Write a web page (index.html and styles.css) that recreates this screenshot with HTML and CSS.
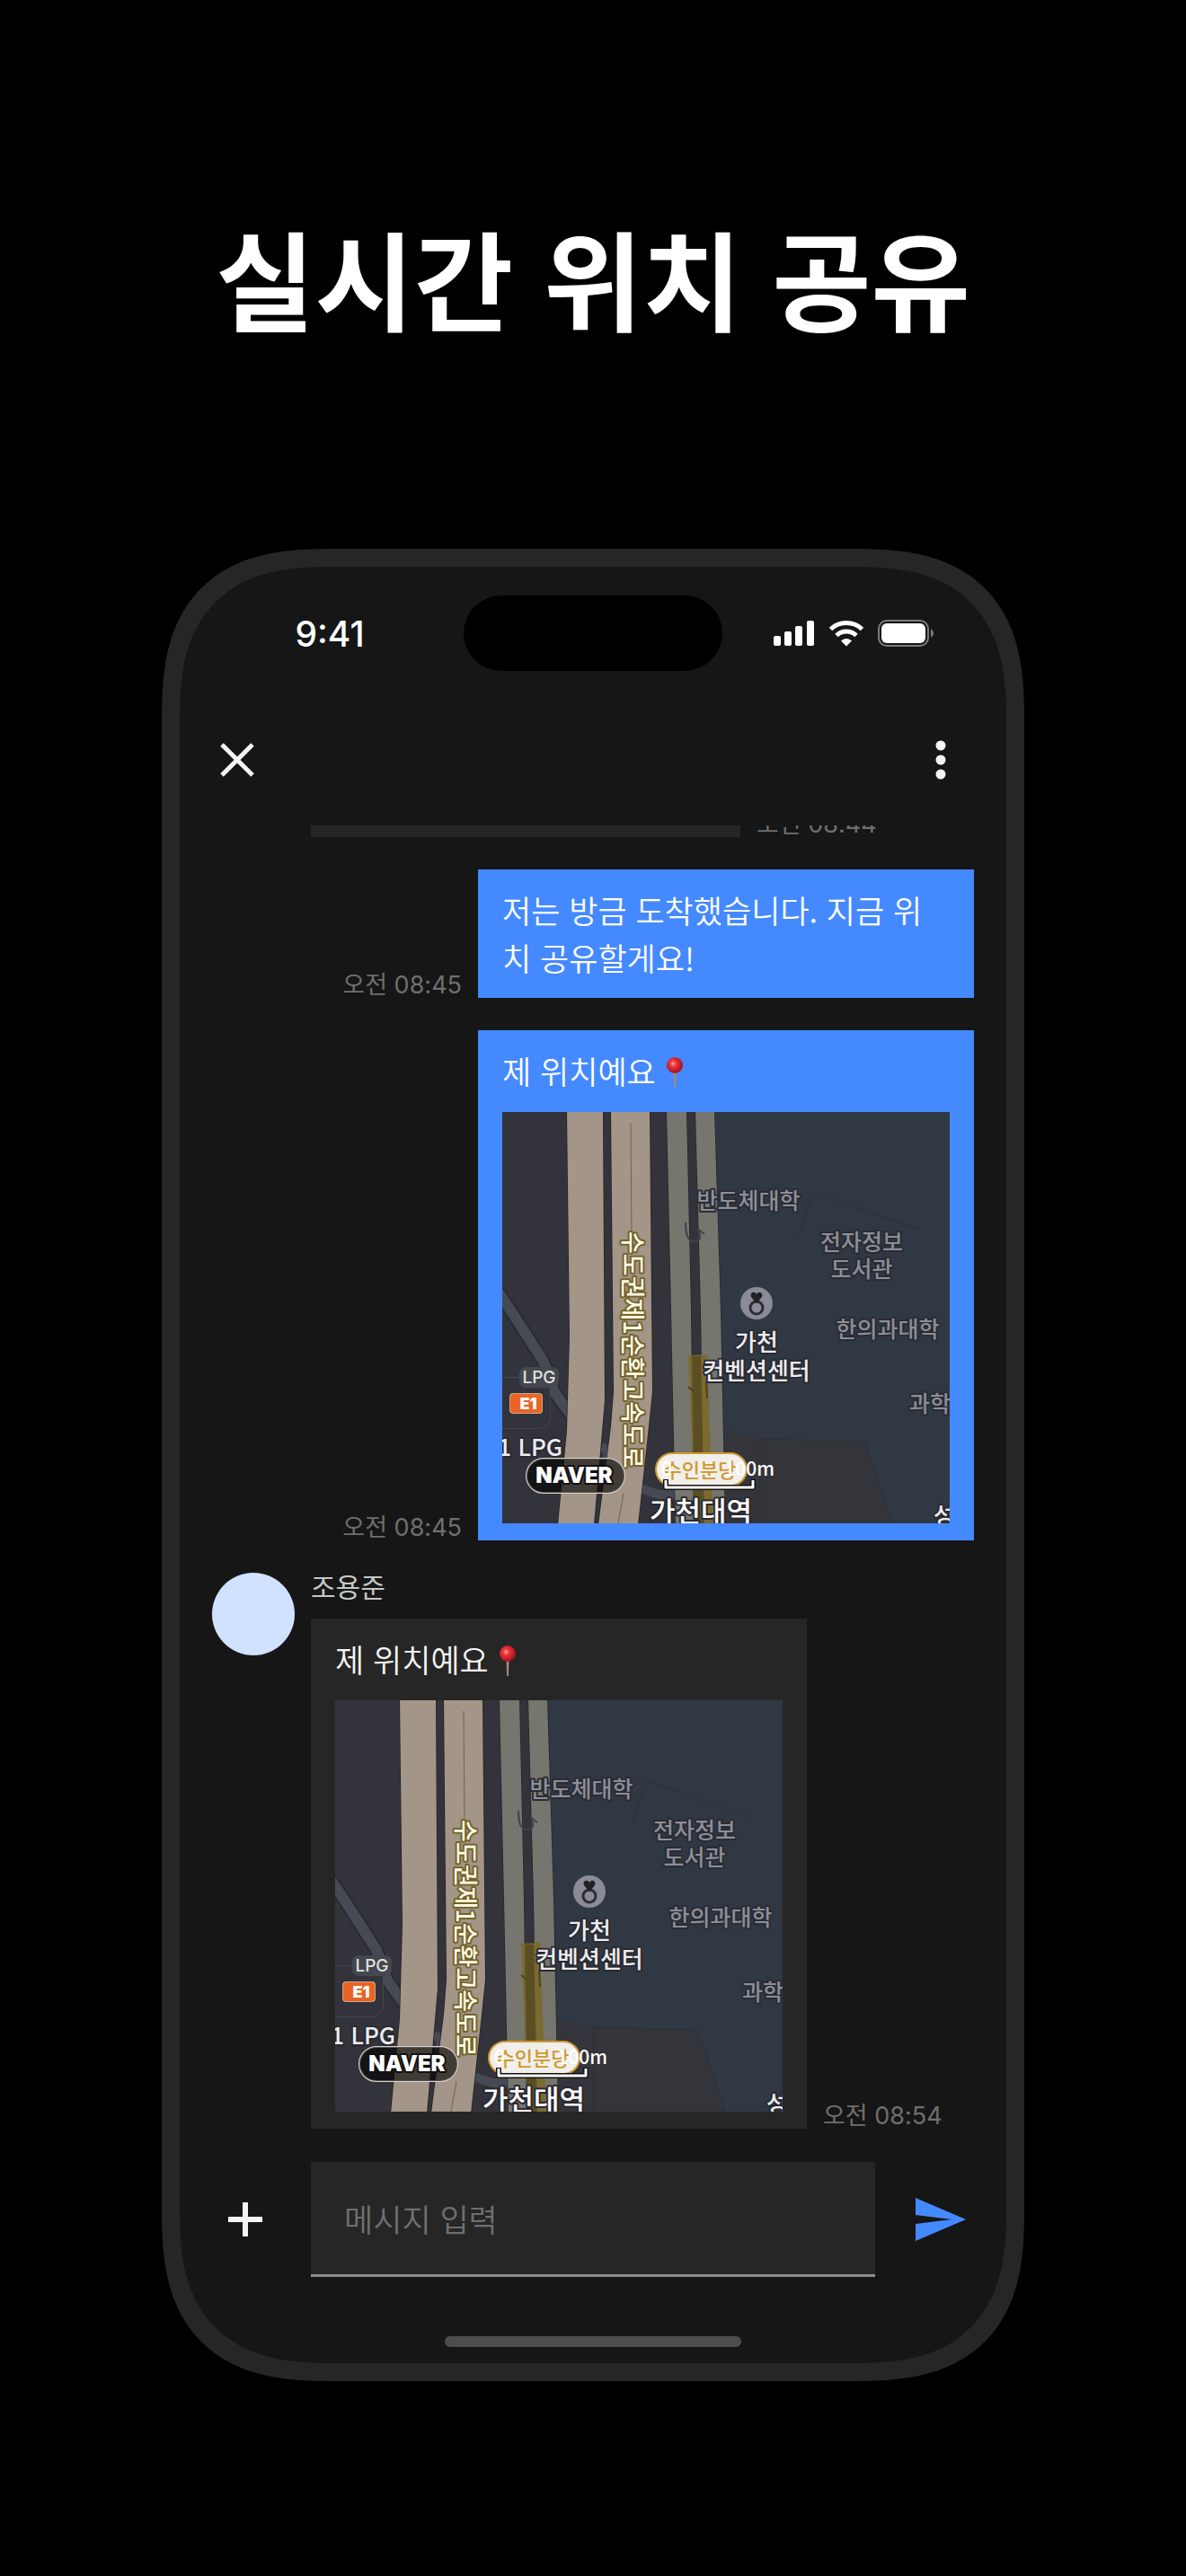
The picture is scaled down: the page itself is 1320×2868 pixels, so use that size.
FILE: index.html
```html
<!DOCTYPE html>
<html lang="ko">
<head>
    <meta charset="UTF-8">
    <meta name="viewport" content="width=device-width, initial-scale=1.0">
    <title>실시간 위치 공유</title>
    <link rel="stylesheet" href="styles.css">
</head>
<body>
    <!-- shared drawings -->
    <svg class="defs" aria-hidden="true">
        <defs>
            <radialGradient id="pinRed" cx="0.4" cy="0.4" r="0.6">
                <stop offset="0" stop-color="#ff9a90"/>
                <stop offset="0.35" stop-color="#e8323a"/>
                <stop offset="1" stop-color="#a8121c"/>
            </radialGradient>
        </defs>
        <symbol id="pin" viewBox="0 0 36 36">
            <path d="M15.500 17h3l-.6 18h-1.800z" fill="#a08a80"/>
            <circle cx="17" cy="10" r="9" fill="url(#pinRed)"/>
        </symbol>
        <symbol id="mapBase" viewBox="0 0 498 458">
            <rect width="498" height="458" fill="#33333b"/>
            <path d="M236 0H498V458H248z" fill="#303844"/>
            <path d="M249 354L287 364L403 367L418 410L434 458H246z" fill="#34343b"/>
            <path d="M287 364V458M287 364L403 367L418 410L434 458M345 89L464 131M345 89L330 138" fill="none" stroke="#2c3139"/>
            <!-- side streets -->
            <path d="M-6 198L12 225L46 278L58 312L84 348" fill="none" stroke="#26282e" stroke-width="15"/>
            <path d="M-6 198L12 225L46 278L58 312L84 348" fill="none" stroke="#454a54" stroke-width="12"/>
            <path d="M110 372L118 378L116 392M150 418L175 426H198" fill="none" stroke="#454a54" stroke-width="10"/>
            <!-- expressway -->
            <g fill="#a39587" stroke="#27221f" stroke-width="1.500">
                <path d="M72 -2H112L114 321L102 460H62L72 355L75 250z"/>
                <path d="M121 -2H164L167 311L163 350L151 460H107L121 350L124 311z"/>
                <path d="M143 12L144 140M135 424L129 458" fill="none" stroke="#6d625a" stroke-width="1"/>
            </g>
            <!-- railway -->
            <g fill="#76756e" stroke="#26272b" stroke-width="1.500">
                <path d="M183 -2H205L210 221L213 460H193L188 221z"/>
                <path d="M215 -2H236L243 221L248 460H225L221 221z"/>
            </g>
            <path d="M204 123C204 138 207 144 214 144C221 144 222 138 218 132M217 130L225 136" fill="none" stroke="#3e434b" stroke-width="2"/>
            <path d="M207 271L228 270L235 458H215z" fill="#7b6a2c" opacity="0.9"/>
            <path d="M211 272H221L225 458H214z" fill="#5b4e22"/>
            <path d="M207 306L213 311M227 300L228 319" fill="none" stroke="#4c421f" stroke-width="2"/>
            <!-- convention center marker -->
            <circle cx="283" cy="213" r="18" fill="#8a8b97"/>
            <circle cx="283" cy="218" r="7" fill="none" stroke="#2b2d34" stroke-width="3"/>
            <path d="M283 213L277 206C275 201 281 199 283 203C285 199 291 201 289 206z" fill="#1f2126"/>
            <!-- gas station -->
            <rect x="-8" y="296" width="61" height="56" rx="12" fill="#33333b" stroke="#4b4c54" stroke-width="1.500"/>
            <rect x="9" y="314" width="35" height="21" rx="3" fill="#ea6424" stroke="#f6cdb9" stroke-width="1.500"/>
            <rect x="19" y="284" width="44" height="23" rx="7" fill="#44484e"/>
        </symbol>
        <symbol id="mapBadges" viewBox="0 0 498 458">
            <rect x="27" y="386" width="109" height="38" rx="19" fill="#000" fill-opacity="0.6" stroke="#d9d1cb" stroke-width="2"/>
            <rect x="172" y="381" width="99" height="34" rx="17" fill="#f1efeb" stroke="#d09a30" stroke-width="4"/>
        </symbol>
        <symbol id="mapScale" viewBox="0 0 498 458">
            <path d="M182 409V418H279V409" fill="none" stroke="#111" stroke-width="6"/>
            <path d="M182 410V418H279V410" fill="none" stroke="#fff" stroke-width="3"/>
        </symbol>
    </svg>

    <h1 class="title">실시간 위치 공유</h1>

    <main class="phone">
        <div class="status-bar">
            <span class="clock">9:41</span>
            <div class="island"></div>
            <div class="status-icons">
                <svg width="46" height="30" viewBox="0 0 46 30" fill="#fff">
                    <rect x="0" y="18" width="8" height="11" rx="2"/>
                    <rect x="12" y="13" width="8" height="16" rx="2"/>
                    <rect x="24" y="7" width="8" height="22" rx="2"/>
                    <rect x="37" y="1" width="8" height="28" rx="2"/>
                </svg>
                <svg width="40" height="30" viewBox="0 0 40 30" fill="none" stroke="#fff" stroke-width="5">
                    <path d="M2.500 10.500C12 1.200 28 1.200 37.500 10.500"/>
                    <path d="M9 17.500C15 11.500 25 11.500 31 17.500"/>
                    <path d="M14 23.500C17.500 20 22.500 20 26 23.500L20 29.500z" fill="#fff" stroke="none"/>
                </svg>
                <svg width="64" height="30" viewBox="0 0 64 30">
                    <rect x="1" y="1" width="55" height="28" rx="9" fill="none" stroke="#7b7b7b" stroke-width="2"/>
                    <rect x="4" y="4" width="49" height="22" rx="6" fill="#fff"/>
                    <path d="M59 10.500C63 12 63 18 59 19.500z" fill="#7b7b7b"/>
                </svg>
            </div>
        </div>

        <header class="app-bar">
            <button class="icon-button" type="button" aria-label="닫기">
                <svg width="56" height="56" viewBox="0 0 56 56" stroke="#f4f4f4" stroke-width="5"><path d="M11 11L45 45M45 11L11 45"/></svg>
            </button>
            <button class="icon-button" type="button" aria-label="메뉴">
                <svg width="56" height="56" viewBox="0 0 56 56" fill="#f4f4f4"><circle cx="28" cy="12" r="5.500"/><circle cx="28" cy="28" r="5.500"/><circle cx="28" cy="44" r="5.500"/></svg>
            </button>
        </header>

        <section class="chat">
            <div class="message received">
                <div class="bubble short"></div>
                <time class="time">오전 08:44</time>
            </div>

            <div class="message sent">
                <time class="time">오전 08:45</time>
                <div class="bubble">
                    <p>저는 방금 도착했습니다. 지금 위치 공유할게요!</p>
                </div>
            </div>

            <div class="message sent">
                <time class="time">오전 08:45</time>
                <div class="bubble">
                    <p>제 위치예요<svg class="pin"><use href="#pin"/></svg></p>
                    <svg class="map" viewBox="0 0 498 458">
                        <use href="#mapBase"/>
                        <text class="road" transform="translate(135 133) rotate(90)">수도권제1순환고속도로</text>
                        <text class="place" x="274" y="108">반도체대학</text>
                        <text class="place" x="400" y="154">전자정보</text>
                        <text class="place" x="400" y="184">도서관</text>
                        <text class="place" x="429" y="251">한의과대학</text>
                        <text class="place start" x="453" y="334">과학</text>
                        <text class="poi" x="283" y="266">가천</text>
                        <text class="poi" x="283" y="298">컨벤션센터</text>
                        <text class="poi start" x="480" y="459">성</text>
                        <text class="tag" x="41" y="302">LPG</text>
                        <text class="brand" x="29" y="331">E1</text>
                        <text class="poi end" x="67" y="383">1 LPG</text>
                        <use href="#mapBadges"/>
                        <text class="naver" x="80" y="413">NAVER</text>
                        <text class="line" x="220" y="407">수인분당</text>
                        <text class="scale" x="177" y="405">0</text>
                        <text class="scale end" x="303" y="405">100m</text>
                        <text class="station" x="221" y="456">가천대역</text>
                        <use href="#mapScale"/>
                    </svg>
                </div>
            </div>

            <div class="message received">
                <div class="avatar"></div>
                <div class="body">
                    <span class="name">조용준</span>
                    <div class="bubble">
                        <p>제 위치예요<svg class="pin"><use href="#pin"/></svg></p>
                        <svg class="map" viewBox="0 0 498 458">
                            <use href="#mapBase"/>
                            <text class="road" transform="translate(135 133) rotate(90)">수도권제1순환고속도로</text>
                            <text class="place" x="274" y="108">반도체대학</text>
                            <text class="place" x="400" y="154">전자정보</text>
                            <text class="place" x="400" y="184">도서관</text>
                            <text class="place" x="429" y="251">한의과대학</text>
                            <text class="place start" x="453" y="334">과학</text>
                            <text class="poi" x="283" y="266">가천</text>
                            <text class="poi" x="283" y="298">컨벤션센터</text>
                            <text class="poi start" x="480" y="459">성</text>
                            <text class="tag" x="41" y="302">LPG</text>
                            <text class="brand" x="29" y="331">E1</text>
                            <text class="poi end" x="67" y="383">1 LPG</text>
                            <use href="#mapBadges"/>
                            <text class="naver" x="80" y="413">NAVER</text>
                            <text class="line" x="220" y="407">수인분당</text>
                            <text class="scale" x="177" y="405">0</text>
                            <text class="scale end" x="303" y="405">100m</text>
                            <text class="station" x="221" y="456">가천대역</text>
                            <use href="#mapScale"/>
                        </svg>
                    </div>
                </div>
                <time class="time">오전 08:54</time>
            </div>
        </section>

        <form class="composer">
            <button class="icon-button" type="button" aria-label="첨부">
                <svg width="56" height="56" viewBox="0 0 56 56" stroke="#f4f4f4" stroke-width="6"><path d="M9 28H47M28 9V47"/></svg>
            </button>
            <input type="text" aria-label="메시지 입력" placeholder="메시지 입력">
            <button class="icon-button" type="submit" aria-label="보내기">
                <svg width="56" height="56" viewBox="0 0 56 56" fill="#4589ff"><path d="M0 4L56 28L0 52V33L40 28L0 23z"/></svg>
            </button>
        </form>

        <div class="home-indicator"></div>
    </main>
</body>
</html>
```

FILE: styles.css
```css
* {
    box-sizing: border-box;
}
body {
    margin: 0;
    padding: 220px 24px 217px;
    background-color: #000;
    color: #f4f4f4;
    font-family: Inter, "Noto Sans CJK KR", sans-serif;
}
.defs {
    position: absolute;
    width: 0;
    height: 0;
}
.title {
    margin: 0 0 215px;
    font-family: "Noto Sans CJK KR", sans-serif;
    font-size: 120px;
    font-weight: 700;
    line-height: 176px;
    text-align: center;
    color: #fff;
}

/* Device */
.phone {
    display: flex;
    flex-direction: column;
    width: 100%;
    max-width: 960px;
    aspect-ratio: 8 / 17;
    margin: 0 auto;
    border: 20px solid #262626;
    border-radius: 150px;
    background-color: #161616;
    overflow: hidden;
}
@supports (corner-shape: superellipse(1.4)) {
    .phone {
        border-radius: 190px;
        corner-shape: superellipse(1.4);
    }
}
.status-bar {
    display: grid;
    grid-template-columns: 1fr 288px 1fr;
    align-items: center;
    justify-items: center;
    padding-top: 32px;
}
.clock {
    padding-left: 18px;
    font-size: 39px;
    font-weight: 500;
    color: #fff;
}
.island {
    width: 288px;
    height: 84px;
    border-radius: 42px;
    background-color: #000;
}
.status-icons {
    display: flex;
    gap: 15px;
    padding-right: 22px;
}
.app-bar {
    display: flex;
    align-items: center;
    justify-content: space-between;
    height: 146px;
    margin-top: 26px;
    padding: 0 36px;
}
.icon-button {
    display: flex;
    align-items: center;
    justify-content: center;
    padding: 0;
    border: 0;
    background: none;
    cursor: pointer;
}
.app-bar .icon-button {
    width: 56px;
    height: 56px;
}
.app-bar .icon-button:last-child {
    width: 74px;
}

/* Messages, newest at the bottom */
.chat {
    display: flex;
    flex: 1 1 0;
    flex-direction: column;
    justify-content: flex-end;
    gap: 36px;
    min-height: 0;
    padding: 0 36px;
    overflow: hidden;
}
.message {
    display: flex;
    align-items: flex-end;
    gap: 18px;
}
.sent {
    justify-content: flex-end;
}
.bubble {
    width: 552px;
    padding: 18px 27px 19px;
    background-color: #262626;
}
.bubble.short {
    width: 478px;
    height: 90px;
    margin-left: 110px;
}
.sent .bubble {
    background-color: #4589ff;
    color: #fff;
}
.bubble p {
    margin: 0;
    font-family: "Noto Sans CJK KR", sans-serif;
    font-size: 35px;
    font-weight: 350;
    line-height: 53px;
    word-break: break-all;
}
.time {
    font-size: 27px;
    line-height: 28px;
    white-space: nowrap;
    color: #6f6f6f;
}
.avatar {
    align-self: flex-start;
    flex: none;
    width: 92px;
    height: 92px;
    border-radius: 50%;
    background-color: #d0e2ff;
}
.name {
    display: block;
    margin-bottom: 18px;
    font-size: 30px;
    line-height: 33px;
    color: #c6c6c6;
}
.pin {
    width: 36px;
    height: 36px;
    margin-left: 4px;
    vertical-align: -5px;
}

/* Map */
.map {
    display: block;
    width: 100%;
    margin-top: 20px;
    font-family: "Noto Sans CJK KR", sans-serif;
    font-weight: 500;
    text-anchor: middle;
    paint-order: stroke;
    stroke-linejoin: round;
}
.map .place {
    font-size: 25px;
    fill: #8c8e99;
    stroke: #2a2c33;
    stroke-width: 4px;
}
.map .poi {
    font-size: 26px;
    fill: #ececf0;
    stroke: #2a2a30;
    stroke-width: 4px;
}
.map .road {
    font-size: 27px;
    fill: #fffbe6;
    stroke: #74632b;
    stroke-width: 4px;
    text-anchor: start;
}
.map .tag {
    font-family: Inter, sans-serif;
    font-size: 19px;
    fill: #e0e0e0;
}
.map .brand {
    font-family: Inter, sans-serif;
    font-size: 18px;
    font-weight: 900;
    fill: #fff;
}
.map .naver {
    font-family: Inter, sans-serif;
    font-size: 24px;
    font-weight: 900;
    fill: #fff;
    stroke: #111;
    stroke-width: 4px;
}
.map .line {
    font-size: 22px;
    fill: #cf992e;
}
.map .scale {
    font-size: 21px;
    fill: #fff;
    text-anchor: start;
}
.map .station {
    font-size: 31px;
    fill: #fff;
    stroke: #2a2a30;
    stroke-width: 4px;
}
.map .start {
    text-anchor: start;
}
.map .end {
    text-anchor: end;
}

/* Input row */
.composer {
    display: grid;
    grid-template-columns: 74px 1fr 74px;
    gap: 36px;
    margin: 37px 36px 66px;
}
.composer input {
    min-width: 0;
    height: 128px;
    padding: 0 37px;
    border: 0;
    border-bottom: 3px solid #8d8d8d;
    border-radius: 0;
    outline: 0;
    background-color: #262626;
    color: #f4f4f4;
    font-family: "Noto Sans CJK KR", sans-serif;
    font-size: 35px;
    font-weight: 350;
}
.composer input::placeholder {
    color: #6f6f6f;
    opacity: 1;
}
.home-indicator {
    flex: none;
    width: 330px;
    height: 12px;
    margin: 0 auto 18px;
    border-radius: 6px;
    background-color: #4d4d4d;
}
```
